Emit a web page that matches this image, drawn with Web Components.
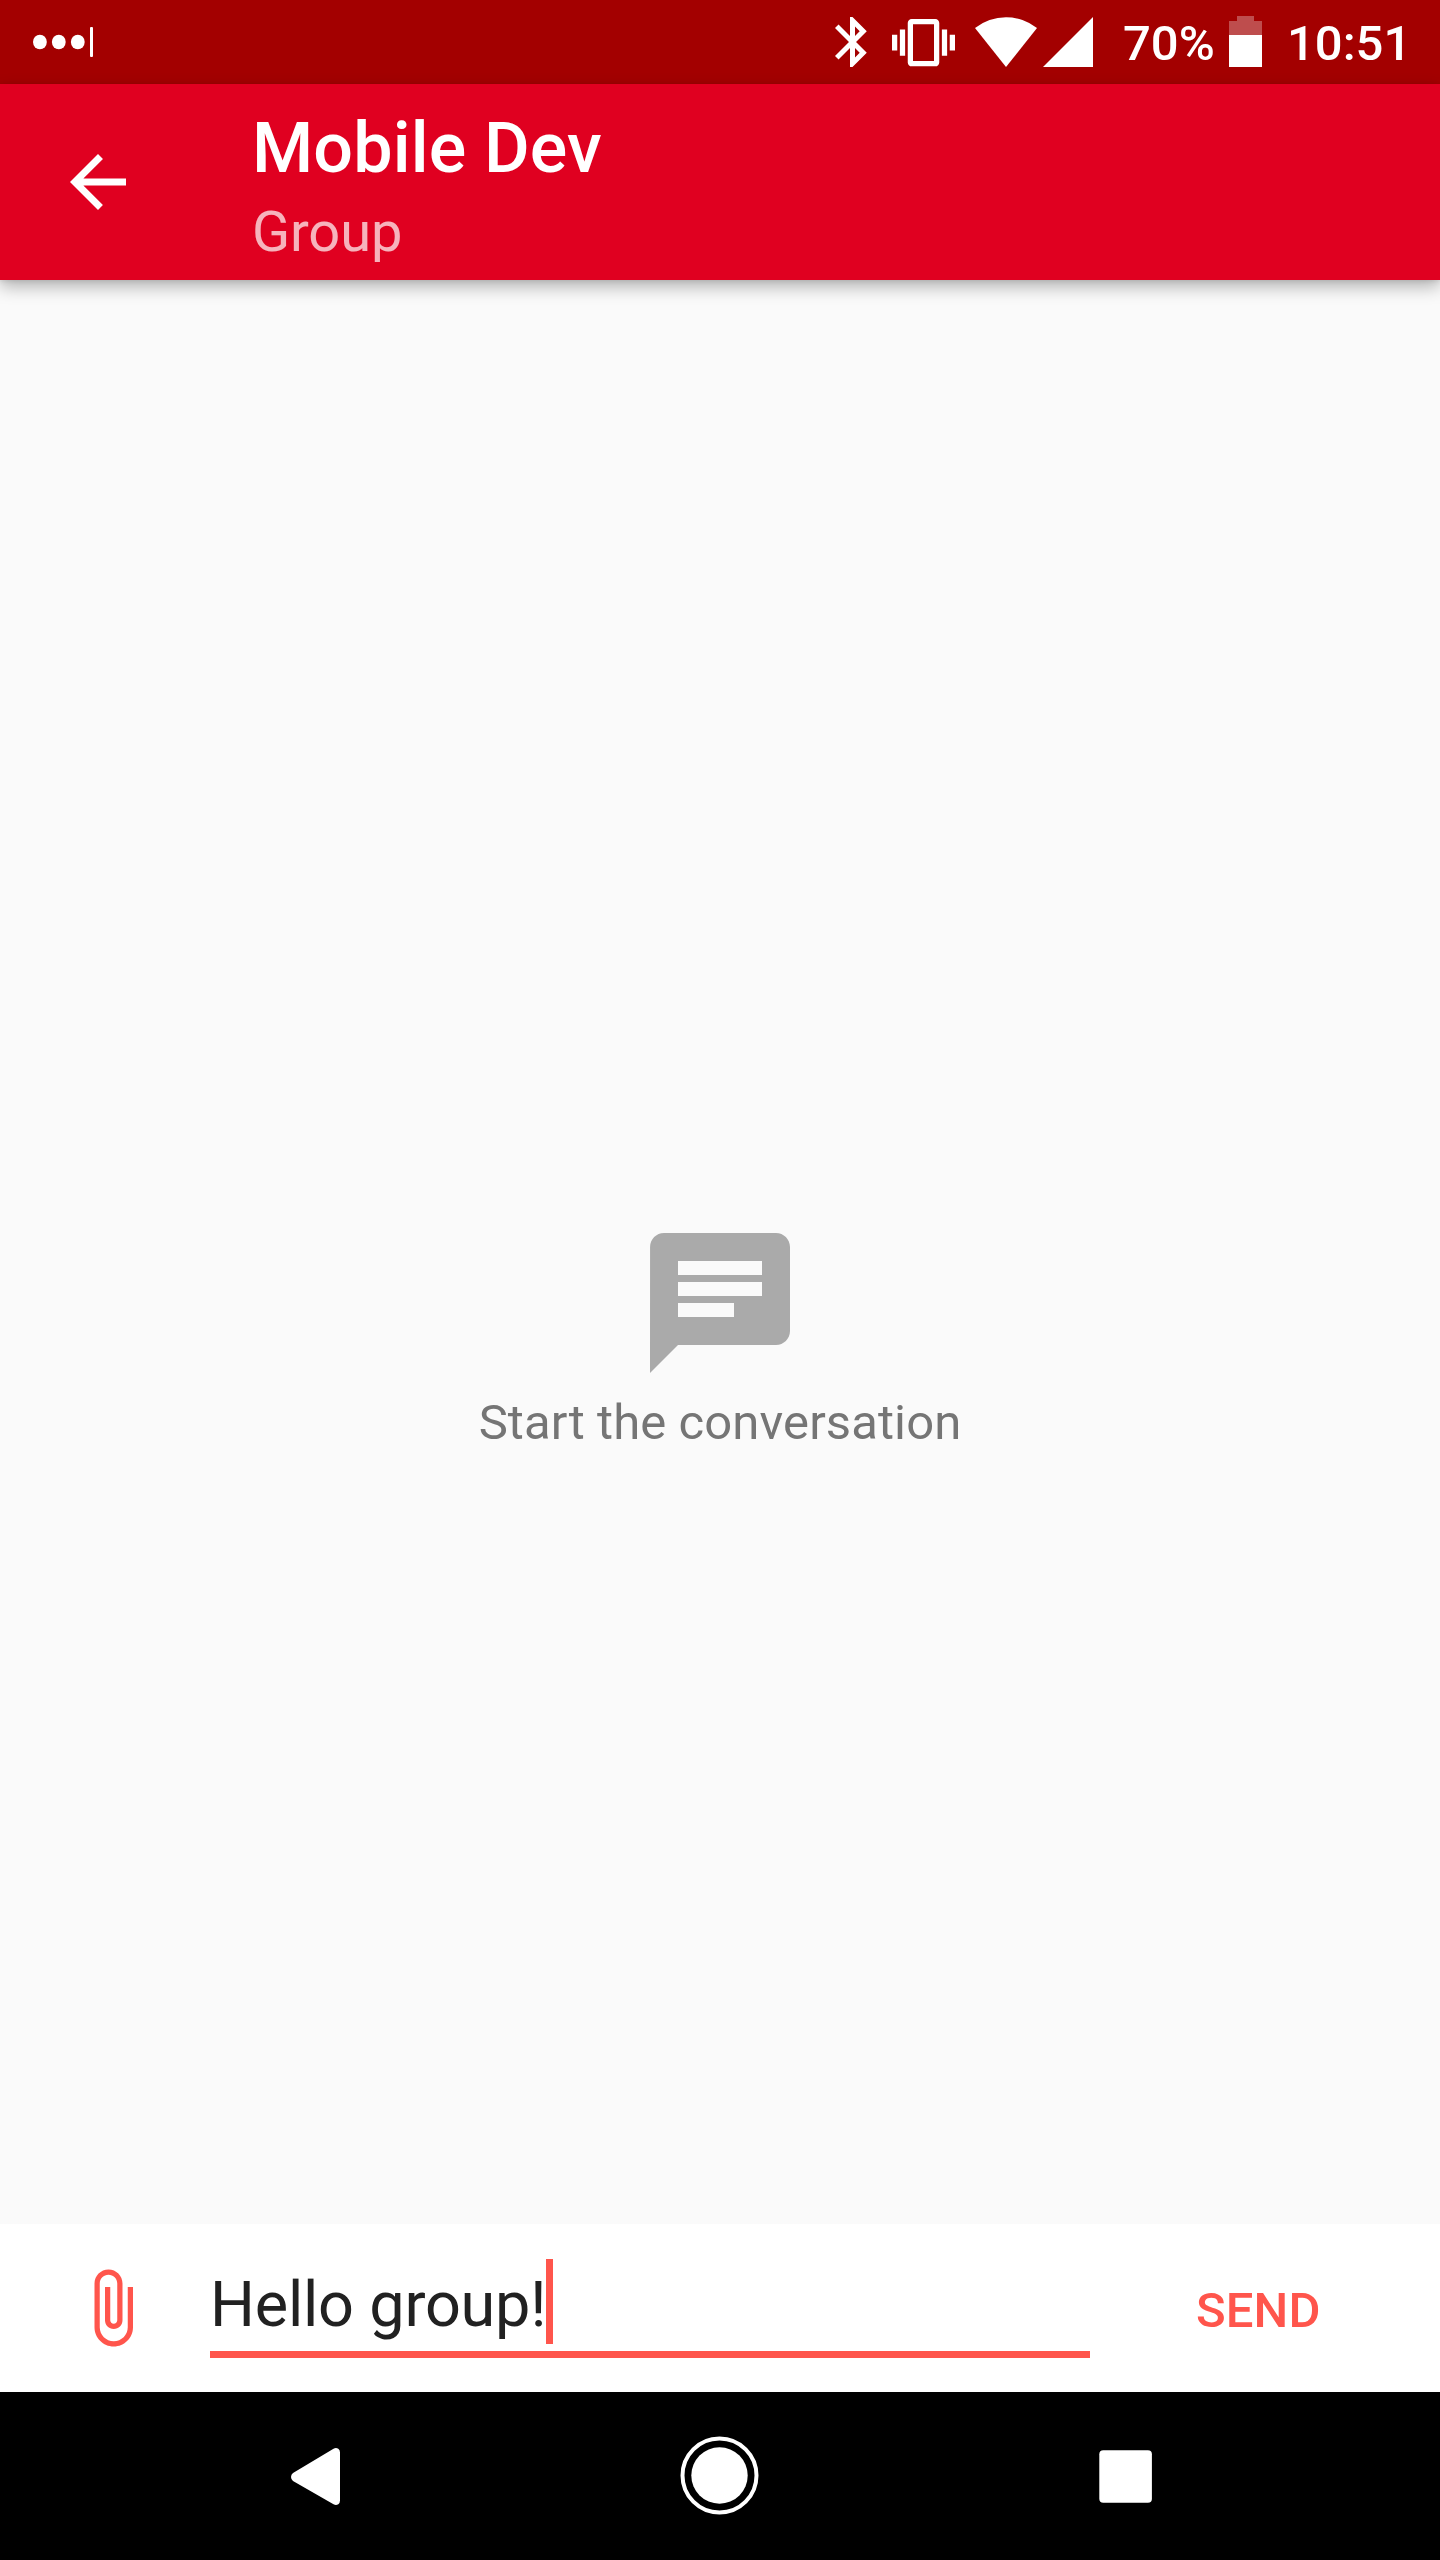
<!DOCTYPE html>
<html lang="en">
<head>
<meta charset="utf-8">
<title>Mobile Dev</title>
<style>
html, body { margin: 0; height: 2560px; overflow: hidden; }
body { font-family: Roboto, "Liberation Sans", sans-serif; background: #fafafa; }
</style>
</head>
<body>
<chat-app></chat-app>
<script>
const define = (name, html) => customElements.define(name, class extends HTMLElement {
  constructor() {
    super();
    this.attachShadow({ mode: 'open' }).innerHTML = html;
  }
});

define('status-bar', `
<style>
:host { display: flex; height: 84px; background: #a30000; color: #fff; font-size: 49px; line-height: 58px; font-weight: 500; }
svg { display: block; height: 84px; fill: #fff; flex: none; }
.text { margin-top: 15px; white-space: nowrap; }
.left { flex: none; width: 834px; box-sizing: border-box; padding-left: 32px; }
.pct { width: 106px; margin-left: 30px; }
.clock { margin-left: 25px; }
</style>
<div class="left"><svg width="62" viewBox="32 0 62 84"><ellipse cx="39.9" cy="42" rx="6.9" ry="7.3"/><ellipse cx="58.8" cy="42" rx="6.9" ry="7.3"/><ellipse cx="77.8" cy="42" rx="6.9" ry="7.3"/><rect x="90" y="27" width="3" height="30" rx="1"/></svg></div>
<svg width="36" viewBox="834 0 36 84"><path transform="translate(822.5 12) scale(2.5)" d="M17.71 7.71L12 2h-1v7.59L6.41 5 5 6.41 10.59 12 5 17.59 6.41 19 11 14.41V22h1l5.71-5.71-4.3-4.29 4.3-4.29zM13 5.83l1.88 1.88L13 9.59V5.83zm1.88 10.46L13 18.17v-3.76l1.88 1.88z"/></svg>
<svg width="90" viewBox="870 0 90 84"><path transform="translate(892 11.2) scale(2.625)" d="M0 15h2V9H0v6zm3 2h2V7H3v10zm19-8v6h2V9h-2zm-3 8h2V7h-2v10zM16.5 3h-9C6.67 3 6 3.67 6 4.5v15c0 .83.67 1.5 1.5 1.5h9c.83 0 1.5-.67 1.5-1.5v-15c0-.83-.67-1.5-1.5-1.5zM16 19H8V5h8v14z"/></svg>
<svg width="80" viewBox="960 0 80 84"><path d="M975 28A50 50 0 0 1 1037 28L1006 67z"/></svg>
<svg width="53" viewBox="1040 0 53 84"><path d="M1093 17V67H1043z"/></svg>
<span class="text pct">70%</span>
<svg width="33" viewBox="1229 0 33 84"><path fill-opacity=".3" d="M1237 16h17v5h8v14h-33V21h8z"/><path d="M1229 35h33v32h-33z"/></svg>
<span class="text clock">10:51</span>`);

define('app-bar', `
<style>
:host { display: flex; height: 196px; background: #e00020; color: #fff; position: relative; box-shadow: 0 7px 16px rgba(0,0,0,.28), 0 1px 5px rgba(0,0,0,.1); }
svg { display: block; flex: none; width: 84px; height: 84px; margin: 56px 112px 0 56px; fill: #fff; }
.titles { padding-top: 23px; }
.title { font-size: 70px; line-height: 82px; font-weight: 500; letter-spacing: .15px; }
.sub { font-size: 56px; line-height: 66px; margin-top: 10px; color: rgba(255,255,255,.7); letter-spacing: -.1px; }
</style>
<svg viewBox="0 0 24 24"><path d="M20 11H7.83l5.59-5.59L12 4l-8 8 8 8 1.41-1.41L7.83 13H20v-2z"/></svg>
<div class="titles"><div class="title"><slot name="title"></slot></div><div class="sub"><slot name="subtitle"></slot></div></div>`);

define('empty-state', `
<style>
:host { display: flex; flex-direction: column; align-items: center; flex: 1; background: #fafafa; padding-top: 939px; color: #757575; font-size: 49px; line-height: 58px; letter-spacing: .1px; }
svg { display: block; width: 168px; height: 168px; fill: #aaa; margin-bottom: 7px; }
</style>
<svg viewBox="0 0 24 24"><path d="M20 2H4c-1.1 0-1.99.9-1.99 2L2 22l4-4h14c1.1 0 2-.9 2-2V4c0-1.1-.9-2-2-2zM6 6h12v2H6V6zm8 8H6v-2h8v2zm4-3H6V9h12v2z"/></svg>
<div><slot></slot></div>`);

define('message-composer', `
<style>
:host { display: flex; height: 168px; background: #fff; color: #ff554c; }
svg { display: block; flex: none; width: 84px; height: 84px; margin: 42px 56px 0 70px; fill: #ff554c; }
.field { display: flex; flex: none; box-sizing: border-box; width: 880px; height: 99px; margin-top: 35px; border-bottom: 7px solid #ff554c; }
.value { flex: none; width: 336px; color: #212121; font-size: 63px; line-height: 74px; margin-top: 9px; white-space: nowrap; letter-spacing: -.22px; }
.caret { flex: none; width: 7px; height: 85px; background: #ff554c; }
.send { font-size: 49px; line-height: 58px; font-weight: 500; margin: 58px 0 0 106px; letter-spacing: .1px; }
</style>
<svg viewBox="0 0 24 24"><path d="M16.5 6v11.5c0 2.21-1.79 4-4 4s-4-1.79-4-4V5c0-1.38 1.12-2.5 2.5-2.5s2.5 1.12 2.5 2.5v10.5c0 .55-.45 1-1 1s-1-.45-1-1V6H10v9.5c0 1.38 1.12 2.5 2.5 2.5s2.5-1.12 2.5-2.5V5c0-2.21-1.79-4-4-4S7 2.79 7 5v12.5c0 3.04 2.46 5.5 5.5 5.5s5.5-2.46 5.5-5.5V6h-1.5z"/></svg>
<div class="field"><span class="value"><slot></slot></span><span class="caret"></span></div>
<div class="send">SEND</div>`);

define('nav-bar', `
<style>
:host { display: flex; height: 168px; background: #000; justify-content: center; gap: 322px; }
svg { display: block; width: 84px; height: 168px; fill: #fff; }
</style>
<svg viewBox="272 2392 84 168"><path d="M293 2473L333.500 2448.800Q336 2447.300 338.300 2448.800Q340 2450 340 2452.500V2500.500Q340 2503 338.300 2504.200Q336 2505.700 333.500 2504.200L293 2481Q291 2479.500 291 2477T293 2473z"/></svg>
<svg viewBox="678 2392 84 168"><circle cx="719.500" cy="2475.500" r="37" fill="none" stroke="#fff" stroke-width="4"/><circle cx="719.500" cy="2475.500" r="28.200"/></svg>
<svg viewBox="1084 2392 84 168"><rect x="1099.300" y="2450.200" width="52.600" height="52.600" rx="4"/></svg>`);

define('chat-app', `
<style>:host { display: flex; flex-direction: column; width: 1440px; height: 2560px; }</style>
<status-bar></status-bar>
<app-bar><span slot="title">Mobile Dev</span><span slot="subtitle">Group</span></app-bar>
<empty-state>Start the conversation</empty-state>
<message-composer>Hello group!</message-composer>
<nav-bar></nav-bar>`);
</script>
</body>
</html>
